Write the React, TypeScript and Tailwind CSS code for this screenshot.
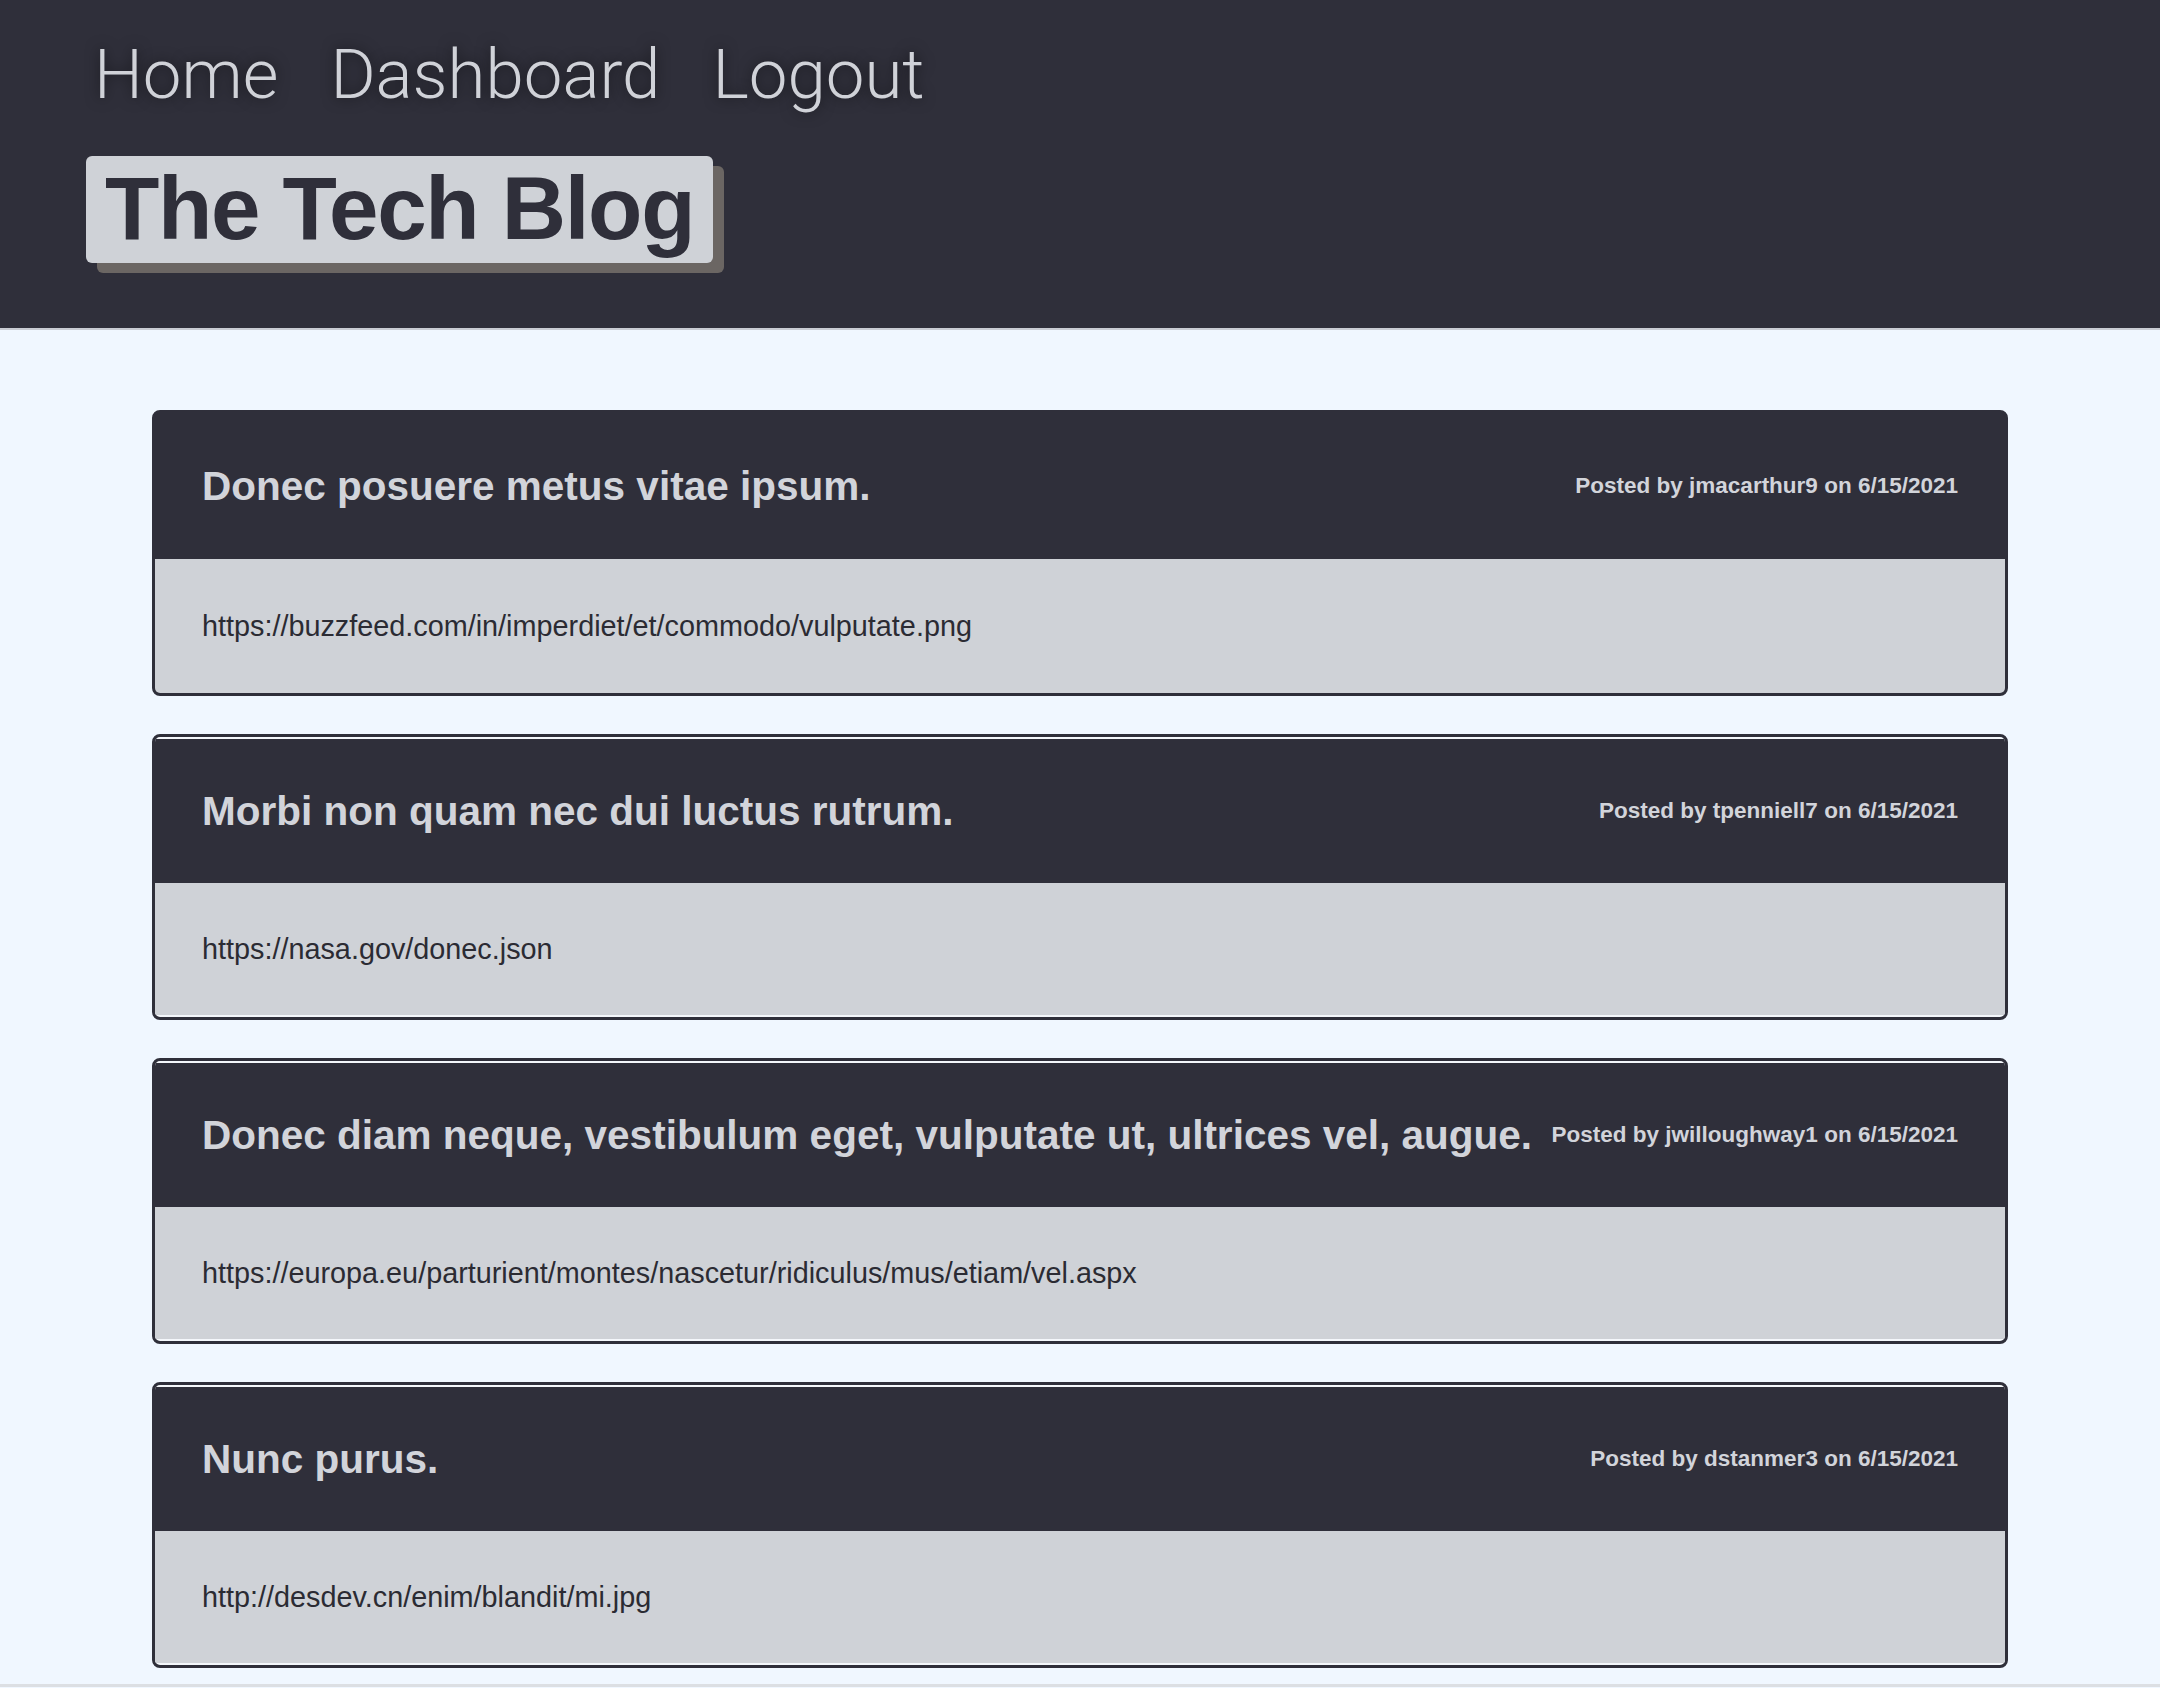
/*
 * Tech blog home — dark header with nav + shadowed wordmark, list of post cards.
 */

const POSTS = [
  {
    title: "Donec posuere metus vitae ipsum.",
    author: "jmacarthur9",
    date: "6/15/2021",
    body: "https://buzzfeed.com/in/imperdiet/et/commodo/vulputate.png",
  },
  {
    title: "Morbi non quam nec dui luctus rutrum.",
    author: "tpenniell7",
    date: "6/15/2021",
    body: "https://nasa.gov/donec.json",
  },
  {
    title: "Donec diam neque, vestibulum eget, vulputate ut, ultrices vel, augue.",
    author: "jwilloughway1",
    date: "6/15/2021",
    body: "https://europa.eu/parturient/montes/nascetur/ridiculus/mus/etiam/vel.aspx",
  },
  {
    title: "Nunc purus.",
    author: "dstanmer3",
    date: "6/15/2021",
    body: "http://desdev.cn/enim/blandit/mi.jpg",
  },
];

const NAV = ["Home", "Dashboard", "Logout"];

function PostCard({ post, edged }: { post: (typeof POSTS)[number]; edged: boolean }) {
  return (
    <article
      className={`overflow-hidden rounded-lg border-[3px] border-[#2f2f3a] ${
        edged ? "bg-[#f4f7fb] py-[2px]" : "bg-[#2f2f3a]"
      }`}
    >
      {/* Card header */}
      <div
        className={`flex items-center justify-between gap-4 bg-[#2f2f3a] px-[47px] text-[#d2d4da] ${
          edged ? "h-[144px]" : "h-[146px]"
        }`}
      >
        <h2 className="text-[40.5px] font-bold leading-none">{post.title}</h2>
        <span className="shrink-0 text-[22.5px] font-bold leading-none">
          Posted by {post.author} on {post.date}
        </span>
      </div>
      {/* Card body */}
      <div
        className={`flex items-center bg-[#cfd2d7] px-[47px] ${edged ? "h-[132px]" : "h-[134px]"}`}
      >
        <p className="text-[28.8px] leading-none text-[#2b2b33]">{post.body}</p>
      </div>
    </article>
  );
}

export default function App() {
  return (
    <div
      className="min-h-screen bg-[#f0f7ff]"
      style={{ fontFamily: '"Liberation Sans", Arial, sans-serif' }}
    >
      <header className="border-b-2 border-[#c9ccd3] bg-[#2f2f3a] px-[86px] pb-[65px] pt-[40px]">
        <nav className="flex gap-[52px] pl-[8px]">
          {NAV.map((item) => (
            <a
              key={item}
              href="#"
              className="text-[69px] font-light leading-none text-[#d0d2d8] [text-shadow:0_0_14px_rgba(0,0,0,0.55)]"
              style={{ fontFamily: 'Roboto, "Liberation Sans", sans-serif' }}
            >
              {item}
            </a>
          ))}
        </nav>
        <div className="mt-[47px] flex">
          <h1 className="rounded-md bg-[#cfd2d7] pb-[10px] pl-[19px] pr-[19px] pt-[8px] text-[89px] font-bold leading-none tracking-[-0.015em] text-[#2f2f3a] shadow-[11px_10px_0_#6b6663]">
            The Tech Blog
          </h1>
        </div>
      </header>

      <main className="flex flex-col gap-[38px] px-[152px] pb-[16px] pt-[80px]">
        {POSTS.map((post, i) => (
          <PostCard key={post.title} post={post} edged={i > 0} />
        ))}
      </main>
      <div className="h-[20px] border-t-[3px] border-[#dcdfe3]" />
    </div>
  );
}
